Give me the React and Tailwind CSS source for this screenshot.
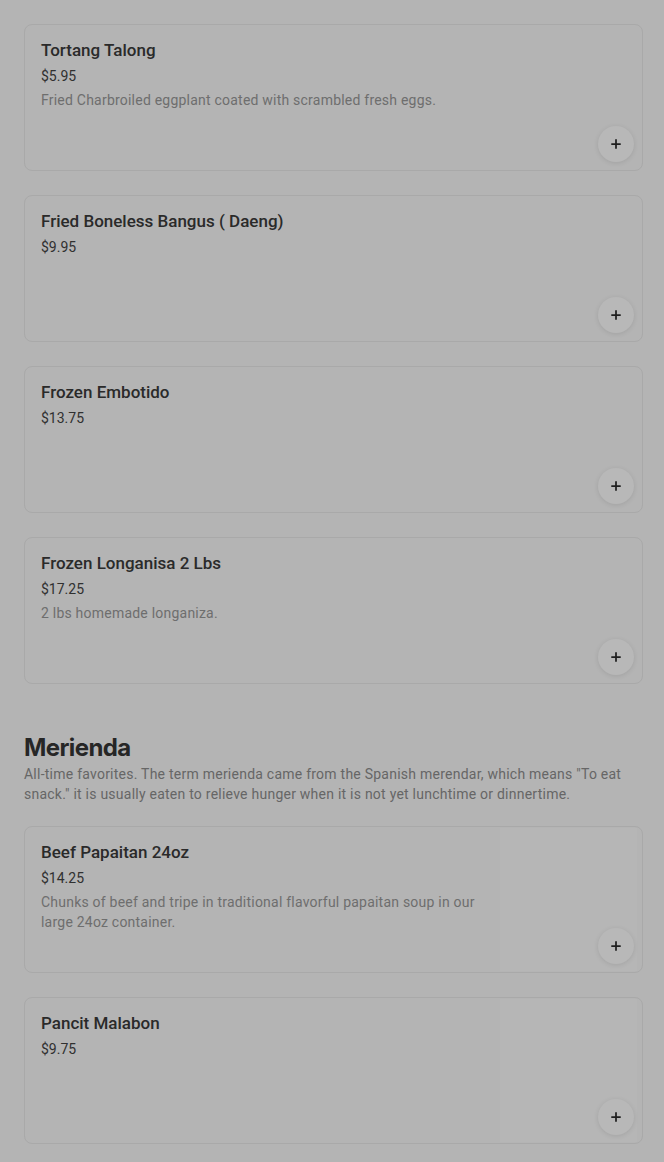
import React from 'react'
import {Plus} from 'lucide-react'

const topItems = [
  {name: 'Tortang Talong', price: '$5.95', desc: 'Fried Charbroiled eggplant coated with scrambled fresh eggs.'},
  {name: 'Fried Boneless Bangus ( Daeng)', price: '$9.95'},
  {name: 'Frozen Embotido', price: '$13.75'},
  {name: 'Frozen Longanisa 2 Lbs', price: '$17.25', desc: '2 lbs homemade longaniza.'},
]

const meriendaItems = [
  {name: 'Beef Papaitan 24oz', price: '$14.25', desc: 'Chunks of beef and tripe in traditional flavorful papaitan soup in our large 24oz container.'},
  {name: 'Pancit Malabon', price: '$9.75'},
]

const ItemCard = ({item, withImage}) => {
  return (
    <div className="relative flex h-[147px] rounded-lg border border-[#a9a9a9] bg-[#b4b4b4] overflow-hidden">
      <div className="flex-1 px-4 pt-[13px]">
        <div className="text-[17px] leading-6 font-medium text-[#2a2a2a]">{item.name}</div>
        <div className="mt-1 text-sm leading-5 text-[#303030]">{item.price}</div>
        {item.desc && (
          <p className="mt-1 text-sm leading-5 tracking-[0.22px] text-[#6e6e6e]">{item.desc}</p>
        )}
      </div>
      {withImage && <div className="w-[137px] my-px mr-[5px] bg-[#b6b6b6]"/>}
      <button className="absolute bottom-2 right-2 flex h-9 w-9 items-center justify-center rounded-full bg-[#b8b8b8] shadow-[0_1px_5px_rgba(0,0,0,0.1)]">
        <Plus size={14} strokeWidth={3} className="text-[#1f1f1f]"/>
      </button>
    </div>
  )
}

export default function App() {
  return (
    <div className="min-h-screen bg-[#b4b4b4] pl-6 pr-[21px] pt-6 pb-6 font-['Roboto',sans-serif]">
      <div className="flex flex-col gap-6">
        {topItems.map((item) => (
          <ItemCard key={item.name} item={item}/>
        ))}
      </div>
      <div className="mt-12">
        <h2 className="text-2xl leading-8 font-bold text-[#262626] font-['Inter',sans-serif] tracking-tight">Merienda</h2>
        <p className="text-sm leading-5 tracking-[0.24px] text-[#666666]">
          All-time favorites. The term merienda came from the Spanish merendar, which means "To eat snack." it is usually eaten to relieve hunger when it is not yet lunchtime or dinnertime.
        </p>
      </div>
      <div className="mt-[22px] flex flex-col gap-6">
        {meriendaItems.map((item) => (
          <ItemCard key={item.name} item={item} withImage/>
        ))}
      </div>
    </div>
  )
}
